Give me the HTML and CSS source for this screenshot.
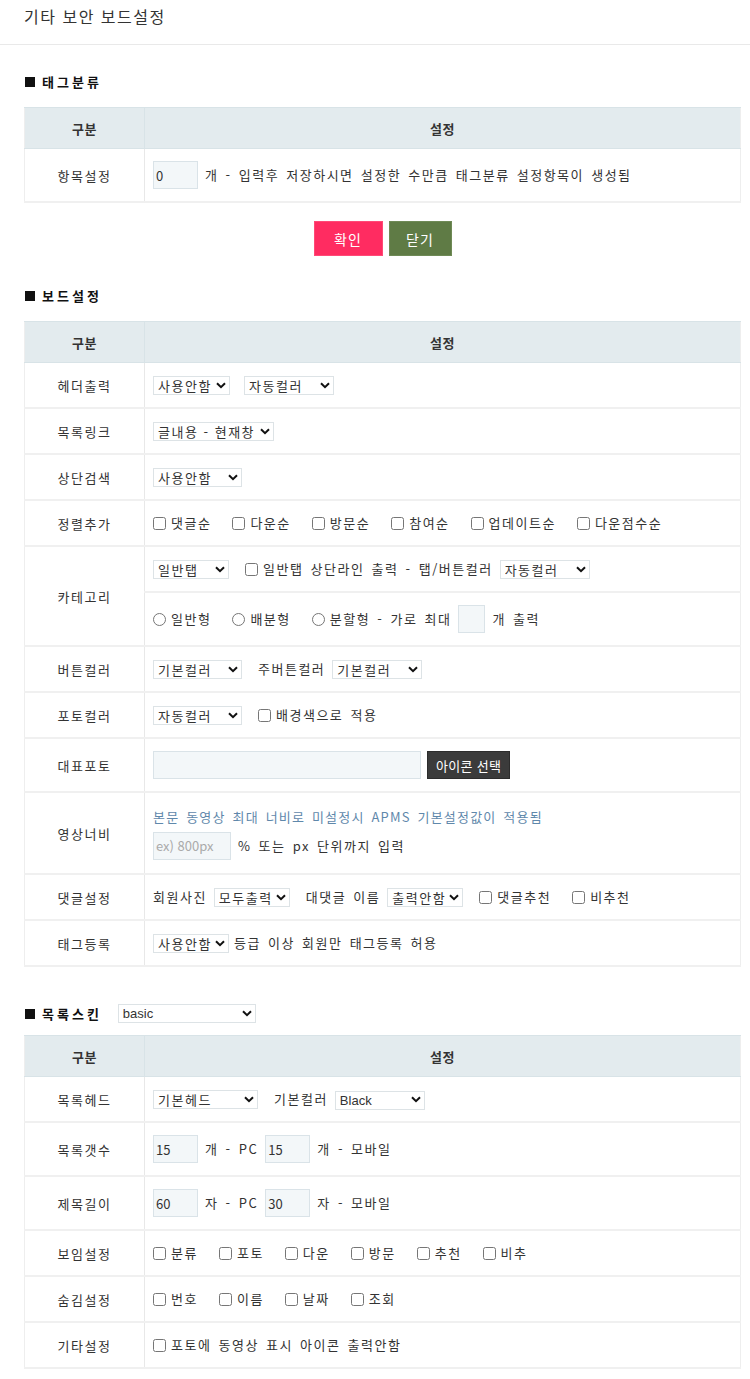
FILE: index.html
```html
<!DOCTYPE html>
<html lang="ko">
<head>
  <meta charset="UTF-8" />
  <title>기타 보안 보드설정</title>
  <link rel="stylesheet" href="styles.css">
</head>
<body>
  <!-- 상단 타이틀 -->
  <div class="page-head">기타 보안 보드설정</div>

  <div class="wrap">
    <!-- 태그분류 -->
    <h3 class="sec-title"><span class="sq"></span>태그분류</h3>
    <table class="tbl">
      <colgroup><col class="c1"><col></colgroup>
      <thead><tr><th>구분</th><th>설정</th></tr></thead>
      <tbody>
        <tr class="tall">
          <td class="lbl">항목설정</td>
          <td><div class="line"><input class="inp w45" type="text" value="0"><span>개 - 입력후 저장하시면 설정한 수만큼 태그분류 설정항목이 생성됨</span></div></td>
        </tr>
      </tbody>
    </table>
    <div class="btns">
      <button class="btn pink" type="button">확인</button>
      <button class="btn green" type="button">닫기</button>
    </div>

    <!-- 보드설정 -->
    <h3 class="sec-title"><span class="sq"></span>보드설정</h3>
    <table class="tbl">
      <colgroup><col class="c1"><col></colgroup>
      <thead><tr><th>구분</th><th>설정</th></tr></thead>
      <tbody>
        <tr>
          <td class="lbl">헤더출력</td>
          <td><div class="line">
            <span class="sel w77"><select><option>사용안함</option></select><svg class="chev" viewBox="0 0 10 7"><path d="M1 1.2l4 4 4-4" /></svg></span>
            <span class="sel w90 ml7"><select><option>자동컬러</option></select><svg class="chev" viewBox="0 0 10 7"><path d="M1 1.2l4 4 4-4" /></svg></span>
          </div></td>
        </tr>
        <tr>
          <td class="lbl">목록링크</td>
          <td><div class="line">
            <span class="sel w121"><select><option>글내용 - 현재창</option></select><svg class="chev" viewBox="0 0 10 7"><path d="M1 1.2l4 4 4-4" /></svg></span>
          </div></td>
        </tr>
        <tr>
          <td class="lbl">상단검색</td>
          <td><div class="line">
            <span class="sel w89"><select><option>사용안함</option></select><svg class="chev" viewBox="0 0 10 7"><path d="M1 1.2l4 4 4-4" /></svg></span>
          </div></td>
        </tr>
        <tr>
          <td class="lbl">정렬추가</td>
          <td><div class="line">
            <label class="chk"><input type="checkbox">댓글순</label>
            <label class="chk"><input type="checkbox">다운순</label>
            <label class="chk"><input type="checkbox">방문순</label>
            <label class="chk"><input type="checkbox">참여순</label>
            <label class="chk"><input type="checkbox">업데이트순</label>
            <label class="chk"><input type="checkbox">다운점수순</label>
          </div></td>
        </tr>
        <tr>
          <td class="lbl" rowspan="2">카테고리</td>
          <td><div class="line">
            <span class="sel w76"><select><option>일반탭</option></select><svg class="chev" viewBox="0 0 10 7"><path d="M1 1.2l4 4 4-4" /></svg></span>
            <label class="chk ml9 nomr"><input type="checkbox">일반탭 상단라인 출력 - 탭/버튼컬러</label>
            <span class="sel w90"><select><option>자동컬러</option></select><svg class="chev" viewBox="0 0 10 7"><path d="M1 1.2l4 4 4-4" /></svg></span>
          </div></td>
        </tr>
        <tr class="tall">
          <td><div class="line">
            <label class="chk"><input type="radio" name="cate">일반형</label>
            <label class="chk"><input type="radio" name="cate">배분형</label>
            <label class="chk nomr"><input type="radio" name="cate">분할형 - 가로 최대</label>
            <input class="inp w27" type="text">
            <span>개 출력</span>
          </div></td>
        </tr>
        <tr>
          <td class="lbl">버튼컬러</td>
          <td><div class="line">
            <span class="sel w89"><select><option>기본컬러</option></select><svg class="chev" viewBox="0 0 10 7"><path d="M1 1.2l4 4 4-4" /></svg></span>
            <span class="ml9">주버튼컬러</span>
            <span class="sel w90"><select><option>기본컬러</option></select><svg class="chev" viewBox="0 0 10 7"><path d="M1 1.2l4 4 4-4" /></svg></span>
          </div></td>
        </tr>
        <tr>
          <td class="lbl">포토컬러</td>
          <td><div class="line">
            <span class="sel w89"><select><option>자동컬러</option></select><svg class="chev" viewBox="0 0 10 7"><path d="M1 1.2l4 4 4-4" /></svg></span>
            <label class="chk ml9"><input type="checkbox">배경색으로 적용</label>
          </div></td>
        </tr>
        <tr class="tall">
          <td class="lbl">대표포토</td>
          <td><div class="line">
            <input class="inp w268" type="text">
            <button class="btn-dark" type="button">아이콘 선택</button>
          </div></td>
        </tr>
        <tr class="video">
          <td class="lbl">영상너비</td>
          <td>
            <div class="note">본문 동영상 최대 너비로 미설정시 APMS 기본설정값이 적용됨</div>
            <div class="line">
              <input class="inp w78" type="text" placeholder="ex) 800px">
              <span>% 또는 px 단위까지 입력</span>
            </div>
          </td>
        </tr>
        <tr>
          <td class="lbl">댓글설정</td>
          <td><div class="line">
            <span>회원사진</span>
            <span class="sel w76"><select><option>모두출력</option></select><svg class="chev" viewBox="0 0 10 7"><path d="M1 1.2l4 4 4-4" /></svg></span>
            <span class="ml9">대댓글 이름</span>
            <span class="sel w76"><select><option>출력안함</option></select><svg class="chev" viewBox="0 0 10 7"><path d="M1 1.2l4 4 4-4" /></svg></span>
            <label class="chk ml9"><input type="checkbox">댓글추천</label>
            <label class="chk"><input type="checkbox">비추천</label>
          </div></td>
        </tr>
        <tr>
          <td class="lbl">태그등록</td>
          <td><div class="line tight">
            <span class="sel w76"><select><option>사용안함</option></select><svg class="chev" viewBox="0 0 10 7"><path d="M1 1.2l4 4 4-4" /></svg></span>
            <span>등급 이상 회원만 태그등록 허용</span>
          </div></td>
        </tr>
      </tbody>
    </table>

    <!-- 목록스킨 -->
    <h3 class="sec-title skin"><span class="sq"></span>목록스킨
      <span class="sel w138 latin"><select><option>basic</option></select><svg class="chev" viewBox="0 0 10 7"><path d="M1 1.2l4 4 4-4" /></svg></span>
    </h3>
    <table class="tbl">
      <colgroup><col class="c1"><col></colgroup>
      <thead><tr><th>구분</th><th>설정</th></tr></thead>
      <tbody>
        <tr>
          <td class="lbl">목록헤드</td>
          <td><div class="line">
            <span class="sel w105"><select><option>기본헤드</option></select><svg class="chev" viewBox="0 0 10 7"><path d="M1 1.2l4 4 4-4" /></svg></span>
            <span class="ml9">기본컬러</span>
            <span class="sel w90 latin"><select><option>Black</option></select><svg class="chev" viewBox="0 0 10 7"><path d="M1 1.2l4 4 4-4" /></svg></span>
          </div></td>
        </tr>
        <tr class="tall">
          <td class="lbl">목록갯수</td>
          <td><div class="line">
            <input class="inp w45" type="text" value="15">
            <span>개 - PC</span>
            <input class="inp w45 ml9" type="text" value="15">
            <span>개 - 모바일</span>
          </div></td>
        </tr>
        <tr class="tall">
          <td class="lbl">제목길이</td>
          <td><div class="line">
            <input class="inp w45" type="text" value="60">
            <span>자 - PC</span>
            <input class="inp w45 ml9" type="text" value="30">
            <span>자 - 모바일</span>
          </div></td>
        </tr>
        <tr>
          <td class="lbl">보임설정</td>
          <td><div class="line">
            <label class="chk"><input type="checkbox">분류</label>
            <label class="chk"><input type="checkbox">포토</label>
            <label class="chk"><input type="checkbox">다운</label>
            <label class="chk"><input type="checkbox">방문</label>
            <label class="chk"><input type="checkbox">추천</label>
            <label class="chk"><input type="checkbox">비추</label>
          </div></td>
        </tr>
        <tr>
          <td class="lbl">숨김설정</td>
          <td><div class="line">
            <label class="chk"><input type="checkbox">번호</label>
            <label class="chk"><input type="checkbox">이름</label>
            <label class="chk"><input type="checkbox">날짜</label>
            <label class="chk"><input type="checkbox">조회</label>
          </div></td>
        </tr>
        <tr>
          <td class="lbl">기타설정</td>
          <td><div class="line">
            <label class="chk"><input type="checkbox">포토에 동영상 표시 아이콘 출력안함</label>
          </div></td>
        </tr>
      </tbody>
    </table>
  </div>
</body>
</html>
```

FILE: styles.css
```css
:root {
  --text: #333;
  --line: #f0f0f0;
  --head-bg: #e3ebee;
  --head-line: #d8e3e7;
  --inp-bg: #f3f7f9;
  --inp-line: #dae3e8;
}
html, body {
  margin: 0; padding: 0;
  background: #fff;
  color: var(--text);
  font-family: "Noto Sans CJK KR", "Noto Sans", sans-serif;
  font-size: 13px;
  letter-spacing: 1.5px;
  word-spacing: 2px;
}
.page-head {
  padding: 6px 24px 17px;
  font-size: 16px;
  line-height: 21px;
  letter-spacing: 1.5px;
  word-spacing: 0;
  border-bottom: 1px solid #e9e9e9;
}
.wrap { padding: 0 9px 10px 24px; }

.sec-title {
  display: flex;
  align-items: center;
  margin: 28px 0 16px;
  font-size: 13px;
  font-weight: bold;
  line-height: 18px;
  letter-spacing: 3px;
  color: #111;
}
.btns + .sec-title { margin-top: 31px; }
.sec-title.skin { margin: 37px 0 12px; }
.sec-title .sel { margin-left: 16px; font-weight: normal; }
.sq {
  width: 10px; height: 10px;
  background: #111;
  margin: 0 7px 0 1px;
}

/* 설정 테이블 */
.tbl {
  width: 100%;
  border-collapse: collapse;
  border-left: 1px solid #eee;
  border-right: 1px solid #eee;
}
.tbl .c1 { width: 120px; }
.tbl th {
  height: 40px;
  padding: 0;
  background: var(--head-bg);
  border-top: 1px solid var(--head-line);
  border-bottom: 1px solid var(--head-line);
  font-weight: bold;
  letter-spacing: 0.5px;
  text-align: center;
}
.tbl th + th { border-left: 1px solid var(--head-line); }
.tbl td {
  height: 44px;
  padding: 0 8px;
  border-bottom: 2px solid var(--line);
  vertical-align: middle;
}
.tbl td.lbl {
  padding: 0;
  text-align: center;
  border-right: 1px solid #e8e8e8;
}
.tbl tr.tall td { height: 52px; }
.tbl tr.video td { height: 80px; }

.line {
  display: flex;
  align-items: center;
  gap: 7px;
  white-space: nowrap;
  line-height: 20px;
}
.line.tight { gap: 5px; }
.ml7 { margin-left: 7px; }
.ml9 { margin-left: 9px; }

.note {
  color: #5f88ab;
  line-height: 20px;
  margin: 0 0 5px;
  letter-spacing: 1.2px;
}

/* 입력 */
.inp {
  box-sizing: border-box;
  height: 28px;
  margin: 0;
  padding: 0 2px;
  background: var(--inp-bg);
  border: 1px solid var(--inp-line);
  font-family: inherit;
  font-size: 13px;
  letter-spacing: 0;
  color: var(--text);
  outline: none;
}
.inp::placeholder { color: #aaa; }
.w27 { width: 27px; }
.w45 { width: 45px; }
.w78 { width: 78px; }
.w268 { width: 268px; }

.sel {
  position: relative;
  display: inline-block;
  height: 19px;
  letter-spacing: 0;
}
.sel select {
  appearance: none;
  -webkit-appearance: none;
  box-sizing: border-box;
  width: 100%;
  height: 19px;
  margin: 0;
  padding: 0 14px 0 4px;
  background: #fff;
  border: 1px solid #dde3e6;
  border-radius: 0;
  font-family: inherit;
  font-size: 13px;
  letter-spacing: 1.5px;
  line-height: 17px;
  color: var(--text);
}
.sel.latin select { font-family: "Liberation Sans", Arial, sans-serif; letter-spacing: 0; }
.sel .chev {
  position: absolute;
  right: 4px; top: 6px;
  width: 10px; height: 7px;
  pointer-events: none;
}
.chev path { fill: none; stroke: #111; stroke-width: 2; }
.w76 { width: 76px; }
.w77 { width: 77px; }
.w89 { width: 89px; }
.w90 { width: 90px; }
.w105 { width: 105px; }
.w121 { width: 121px; }
.w138 { width: 138px; }

.chk {
  display: inline-flex;
  align-items: center;
  gap: 5px;
  margin-right: 14px;
}
.chk.nomr { margin-right: 0; }
.chk input {
  width: 13px; height: 13px;
  margin: 0;
}

/* 버튼 */
.btns {
  display: flex;
  justify-content: center;
  gap: 6px;
  margin-top: 18px;
}
.btn {
  height: 35px;
  padding: 0;
  border: 1px solid transparent;
  color: #fff;
  font-family: inherit;
  font-size: 14px;
  letter-spacing: 1px;
  cursor: pointer;
}
.btn.pink { background: #ff2c61; border-color: #ff4a77; width: 69px; }
.btn.green { background: #5f7b45; border-color: #6f8a56; width: 63px; }
.btn-dark {
  height: 28px;
  padding: 0 8px;
  background: #3b3b3b;
  border: 1px solid #2c2c2c;
  color: #fff;
  font-family: inherit;
  font-size: 13px;
  letter-spacing: 0.3px;
  margin-left: -1px;
}
```
